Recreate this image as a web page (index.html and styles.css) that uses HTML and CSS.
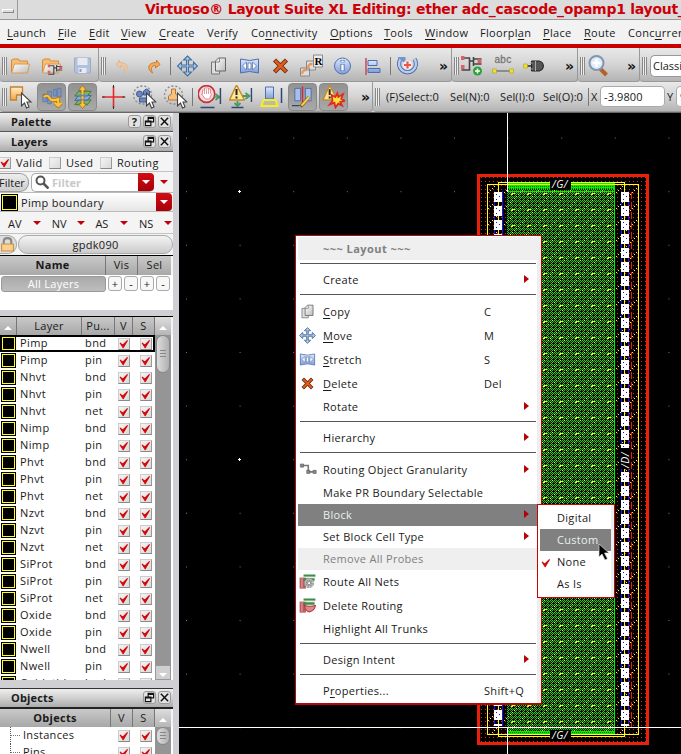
FILE: index.html
```html
<!DOCTYPE html>
<html lang="en">
<head>
<meta charset="utf-8">
<title>Virtuoso Layout Suite XL</title>
<link rel="stylesheet" href="styles.css">
</head>
<body>
<svg class="defs" width="0" height="0">
  <defs>
    <linearGradient id="gOr" x1="0" y1="0" x2="0" y2="1"><stop offset="0" stop-color="#fff0cc"/><stop offset="1" stop-color="#f2a645"/></linearGradient>
    <linearGradient id="gBl" x1="0" y1="0" x2="0" y2="1"><stop offset="0" stop-color="#dce8fb"/><stop offset="1" stop-color="#7f9dd8"/></linearGradient>
    <linearGradient id="gGr" x1="0" y1="0" x2="1" y2="1"><stop offset="0" stop-color="#fff"/><stop offset="1" stop-color="#bbb"/></linearGradient>
    <symbol id="folder" viewBox="0 0 24 24"><path d="M3 18V6l2-1h5l1 2h8v4" fill="#f8bd74" stroke="#d58a3a"/><path d="M3 19l3-9h15l-2 9z" fill="url(#gGr)" stroke="#dd9a50"/></symbol>
    <symbol id="net" viewBox="0 0 24 24"><path d="M1 4h8v12H1M9 7h4M13 3v9M13 5h8M13 10h8" fill="none" stroke="#444" stroke-width="1.600"/><path d="M0 2h4v4H0zM0 11h4v4H0zM17 5h4v4h-4z" fill="#d9626a"/></symbol>
    <symbol id="save" viewBox="0 0 24 24"><path d="M4 4h16v15H5l-1-1z" fill="#b4c1da" stroke="#9aabca"/><path d="M7 4h10v7H7zM8 14h8v5H8z" fill="#e6eaf2"/><path d="M10 15v3" stroke="#8b9fc4" stroke-width="2"/></symbol>
    <symbol id="undo" viewBox="0 0 24 24"><path d="M9 6L5.500 10.500 10 14v-2.500c4 0 5 3 3 7.500 6-4 5-10.500-4-10.500z" fill="#efc7a0" stroke="#dcb48c" stroke-width=".8"/></symbol>
    <symbol id="redo" viewBox="0 0 24 24"><path d="M15 6l3.500 4.500L14 14v-2.500c-4 0-5 3-3 7.500-6-4-5-10.500 4-10.500z" fill="#f5a95a" stroke="#c97722" stroke-width=".9"/></symbol>
    <symbol id="move" viewBox="0 0 24 24"><path d="M12 2l4 4h-3v5h5V8l4 4-4 4v-3h-5v5h3l-4 4-4-4h3v-5H6v3l-4-4 4-4v3h5V6H8z" fill="#a9c6e8" stroke="#476f9c" stroke-width="1.100"/></symbol>
    <symbol id="copy" viewBox="0 0 24 24"><path d="M5 8h8v12H5z" fill="#ddd" stroke="#777"/><path d="M9 7l3-3h7v13H9z" fill="url(#gGr)" stroke="#666"/><path d="M9 8h4V4" fill="none" stroke="#888"/></symbol>
    <symbol id="stretch" viewBox="0 0 24 24"><path d="M3 5q9 3 18 0v14q-9-3-18 0z" fill="url(#gBl)" stroke="#4d6eaf"/><path d="M9 8l-4 4 4 4zM15 8l4 4-4 4zM10.500 9h3v6h-3z" fill="#fff" stroke="#5a76b0" stroke-width=".8"/></symbol>
    <symbol id="del" viewBox="0 0 24 24"><path d="M6 6l12 12M18 6L6 18" stroke="#6a2a0c" stroke-width="4.400"/><path d="M6.500 6.500l11 11M17.500 6.500l-11 11" stroke="#dd5b1d" stroke-width="2.600"/></symbol>
    <symbol id="rot" viewBox="0 0 24 24"><path d="M1 14h9v8H1zM7 7h9v9H7z" fill="#dedede" stroke="#888"/><path d="M14 1h9v12h-9z" fill="#eee" stroke="#888"/><path d="M3 20q-1-4 4-4M9 14q-1-4 4-4" fill="none" stroke="#e8995a" stroke-width="2.400"/><text x="15" y="11" font-size="11" font-family="Liberation Serif" font-weight="bold">R</text></symbol>
    <symbol id="info" viewBox="0 0 24 24"><circle cx="12" cy="12" r="8" fill="url(#gBl)" stroke="#5270ae"/><path d="M12 10v7M12 6v2.300" stroke="#4a67a8" stroke-width="4"/><path d="M12 10.500v6M12 6.500v1.500" stroke="#fff" stroke-width="2.400"/></symbol>
    <symbol id="align" viewBox="0 0 24 24"><path d="M4.500 4v17" stroke="#c9525a" stroke-width="1.600"/><path d="M6.500 6.500h9v5h-9zM6.500 14.500h12v4h-12z" fill="url(#gBl)" stroke="#4d6eaf"/></symbol>
    <symbol id="spin" viewBox="0 0 24 24"><path d="M5 5a8.500 8.500 0 1 0 14 0" fill="none" stroke="#4e6da9" stroke-width="4.200"/><path d="M5 5a8.500 8.500 0 1 0 14 0" fill="none" stroke="#b9cdf2" stroke-width="2.400"/><path d="M2 3h8v7z" fill="#7595cf"/><circle cx="12" cy="11" r="4.500" fill="#eef"/><path d="M12 7.500v7M8.500 11h7" stroke="#f0553a" stroke-width="2.200"/></symbol>
    <symbol id="abc" viewBox="0 0 24 24"><text x="3" y="9" font-size="10" font-family="Liberation Sans" fill="#777" stroke="#777" stroke-width=".3">abc</text><path d="M4 17h17" stroke="#777" stroke-width="1.500"/><path d="M1 15h4v4H1zM18 15h4v4h-4z" fill="#f2e12b" stroke="#aaa12a" stroke-width=".6"/></symbol>
    <symbol id="plug" viewBox="0 0 24 24"><path d="M4 12h6" stroke="#555" stroke-width="2"/><path d="M1 10h4v4H1z" fill="#f2e12b" stroke="#aaa12a" stroke-width=".6"/><path d="M9 7h8q4 1 4 5t-4 5H9z" fill="#555" stroke="#222"/><path d="M13 7v10M10 9h-3M10 15H7" stroke="#aaa"/></symbol>
    <symbol id="mag" viewBox="0 0 24 24"><path d="M13 14l7 7" stroke="#b5622a" stroke-width="4"/><circle cx="10" cy="9" r="7" fill="#dcebfa" stroke="#8396ae" stroke-width="2"/><path d="M10 5v8M6 9h8" stroke="#fff" stroke-width="2.400"/></symbol>
    <symbol id="ptr" viewBox="0 0 24 24"><path d="M11 8v13l3-3 2 5 2.500-1-2-5h4z" fill="#fff" stroke="#444" stroke-width="1.100"/></symbol>
    <symbol id="sel" viewBox="0 0 24 24"><path d="M2 2h12v8H8v5H2z" fill="url(#gOr)" stroke="#c9802e" stroke-width="1.300"/><use href="#ptr" x="2"/></symbol>
    <symbol id="wire" viewBox="0 0 24 24"><path d="M3 9h4v8H3zM8 6h4v13H8zM14 4h3v7h-3zM18 3h4v9h-4z" fill="#7893c8" stroke="#526ca5" stroke-width=".6"/><path d="M4 12q4-3 6 1t9 1v6M15.500 18l3.500 3.500 3.500-3.500" fill="none" stroke="#a87414" stroke-width="3.600"/><path d="M4 12q4-3 6 1t9 1v6M15.500 18l3.500 3.500 3.500-3.500" fill="none" stroke="#ffc43d" stroke-width="2.200"/></symbol>
    <symbol id="stack" viewBox="0 0 24 24"><path d="M4 20l4-5h13l-4 5z" fill="#7bb661" stroke="#3e7a34"/><path d="M4 15.500l4-5h13l-4 5z" fill="#8baade" stroke="#3e5f9e"/><path d="M4 11l4-5h13l-4 5z" fill="#7bb661" stroke="#3e7a34"/><path d="M12 0l4 5h-2.500v14H16l-4 5-4-5h2.500V5H8z" fill="#ffc43d" stroke="#8e6415" stroke-width=".7"/><path d="M7 15h10M7 10.500h10" stroke="#5f82c0" stroke-width="1.500"/></symbol>
    <symbol id="cross" viewBox="0 0 24 24"><path d="M12 1v22M1 12h22" stroke="#e8282c" stroke-width="1.600"/><path d="M12 0v3M12 21v3M0 12h3M21 12h3" stroke="#333"/></symbol>
    <symbol id="shapes" viewBox="0 0 24 24"><circle cx="10" cy="10" r="9" fill="none" stroke="#888" stroke-dasharray="2 2" stroke-width="1.300"/><circle cx="7" cy="9" r="3" fill="#6d88c0" stroke="#3f5a92"/><path d="M11 6l3-2 3 2v4h-6zM7 13h7v4H7z" fill="#6d88c0" stroke="#3f5a92"/><use href="#ptr" x="3"/></symbol>
    <symbol id="stamp" viewBox="0 0 24 24"><circle cx="10" cy="10" r="9" fill="none" stroke="#888" stroke-dasharray="2 2" stroke-width="1.300"/><path d="M8 4h4v5l3 2v4H5v-4l3-2z" fill="#f7c27f" stroke="#bd762c"/><use href="#ptr" x="3"/></symbol>
    <symbol id="hand" viewBox="0 0 24 24"><circle cx="9" cy="9" r="8.300" fill="#f8dcdc" stroke="#c9303b" stroke-width="1.700"/><path d="M5 9V5h2V3h4v1h2v4l1 1-2 5H8L4 9z" fill="#fff" stroke="#d17b80" stroke-width=".8"/><path d="M7 5v4M9 4v5M11 4v5" stroke="#d17b80" stroke-width=".7"/><path d="M16 12h5M18 9l4 3-4 3" stroke="#4c9a61" fill="none" stroke-width="1.600"/><path d="M23 3v16M3 22.500h14" stroke="#2e4777" stroke-width="1.600"/></symbol>
    <symbol id="warn" viewBox="0 0 24 24"><path d="M8 0L1 15h15z" fill="#ffe793" stroke="#c58a25" stroke-linejoin="round" stroke-width="1.400"/><path d="M8 4v6M8 11.500v2" stroke="#222" stroke-width="2"/></symbol>
    <symbol id="arr" viewBox="0 0 24 24"><path d="M14 11h6M17 8l4 3-4 3M9 16v4M6 18l3 3 3-3" stroke="#4c9a61" fill="none" stroke-width="1.800"/><path d="M23 3v14M3 22.500h12" stroke="#2e4777" stroke-width="1.500"/></symbol>
    <symbol id="hilite" viewBox="0 0 24 24"><path d="M6 2h8v12H6z" fill="url(#gBl)" stroke="#4d6eaf"/><path d="M4 15h12l2 6H2z" fill="#bba" stroke="#f6ee22" stroke-width="2"/><path d="M22 3v15" stroke="#2e4777" stroke-width="1.500"/></symbol>
    <symbol id="edit" viewBox="0 0 24 24"><path d="M4 3h6v13H4zM15 3h6v13h-6z" fill="#a9bfe8" stroke="#4d6eaf"/><path d="M12 1v19" stroke="#d82834" stroke-width="1.500"/><path d="M1 21h8" stroke="#2e4777" stroke-width="1.500"/><path d="M10 22l9-10" stroke="#7d5a18" stroke-width="3.400"/><path d="M11 21l8-9" stroke="#ffd54f" stroke-width="2"/></symbol>
    <symbol id="boom" viewBox="0 0 24 24"><path d="M10 10l4 2 2-4 1 4 5-3-2 5 4 2-5 1 2 4-4-2-3 4-1-5-5 2 3-4z" fill="#f6e53a" stroke="#e5281c" stroke-width="1.800"/></symbol>
    <symbol id="route" viewBox="0 0 24 24"><path d="M2 7h8v14H2z" fill="#bf5b62"/><path d="M7 3h15v3H7zM7 8h14v3H7z" fill="#3e8b4a"/><path d="M7 6.500h14" stroke="#cfe5cf"/><path d="M5 7v13" stroke="#e8b6b8"/></symbol>
    <symbol id="gear" viewBox="0 0 24 24"><circle cx="14" cy="14" r="4.600" fill="#ccc" stroke="#888" stroke-width="3.500" stroke-dasharray="2.500 1"/><circle cx="14" cy="14" r="5" fill="none" stroke="#bbb" stroke-width="1.500"/><circle cx="14" cy="14" r="2" fill="#fff" stroke="#777"/></symbol>
    <symbol id="gran" viewBox="0 0 24 24"><path d="M6 7h7v8h7" fill="none" stroke="#777" stroke-width="2"/><path d="M3 5h4v4H3zM11 13h4v4h-4zM19 13h4v4h-4z" fill="#888" stroke="#555" stroke-width=".7"/></symbol>
    <symbol id="tick" viewBox="0 0 12 12"><path d="M1.500 5l3 2.500L10 2 5 10.500z" fill="#d40a0a" stroke="#d40a0a" stroke-width="1.300" stroke-linejoin="round"/></symbol>
    <symbol id="wins" viewBox="0 0 12 12"><path d="M4.500 1.500h6v5h-6zM4 2.500h7M1.500 5.500h6v5h-6zM1 6.500h7" fill="none" stroke="#111" stroke-width="1.300"/></symbol>
    <symbol id="ex" viewBox="0 0 12 12"><path d="M2 2l8 8M10 2l-8 8" stroke="#111" stroke-width="1.600"/></symbol>
  </defs>
</svg>
<div class="window">
  <header class="titlebar"><span class="sysbtn"><i></i></span><span class="title">Virtuoso® Layout Suite XL Editing: ether adc_cascode_opamp1 layout_</span></header>
  <nav class="menubar">
    <span><u>L</u>aunch</span><span><u>F</u>ile</span><span><u>E</u>dit</span><span><u>V</u>iew</span><span><u>C</u>reate</span><span>Ver<u>i</u>fy</span><span>Co<u>n</u>nectivity</span><span><u>O</u>ptions</span><span><u>T</u>ools</span><span><u>W</u>indow</span><span>Floorpl<u>a</u>n</span><span><u>P</u>lace</span><span><u>R</u>oute</span><span>Conc<u>u</u>rrent</span>
  </nav>
  <div class="toolbar one">
    <div class="group g1"><i class="grip"></i><svg><use href="#folder"/></svg><svg viewBox="0 0 24 24"><use href="#folder" width="24" height="24"/><g transform="translate(8 9) scale(.7)"><use href="#net" width="24" height="24"/></g></svg><svg><use href="#save"/></svg></div>
    <div class="group g2"><i class="grip"></i><svg class="first"><use href="#undo"/></svg><svg><use href="#redo"/></svg><i class="sep"></i><svg><use href="#move"/></svg><svg><use href="#copy"/></svg><svg><use href="#stretch"/></svg><svg><use href="#del"/></svg><svg><use href="#rot"/></svg><svg><use href="#info"/></svg><svg><use href="#align"/></svg><i class="sep"></i><svg><use href="#spin"/></svg><b class="more">»</b></div>
    <div class="group g3"><i class="grip"></i><svg viewBox="0 0 24 24"><use href="#net" width="24" height="24"/><circle cx="17" cy="17" r="4.500" fill="#2aa336"/><path d="M17 14.500v5M14.500 17h5" stroke="#fff" stroke-width="1.500"/></svg><svg><use href="#abc"/></svg><svg><use href="#plug"/></svg><b class="more">»</b></div>
    <div class="group g4"><i class="grip"></i><svg><use href="#mag"/></svg><b class="more">»</b></div>
    <div class="group g5"><i class="grip"></i><span class="combo">Classi</span></div>
  </div>
  <div class="toolbar two">
    <div class="group h1"><i class="grip"></i><svg><use href="#sel"/></svg><svg class="on"><use href="#wire"/></svg><svg class="on"><use href="#stack"/></svg><svg><use href="#cross"/></svg><svg><use href="#shapes"/></svg><svg><use href="#stamp"/></svg><i class="sep"></i><svg><use href="#hand"/></svg><svg><use href="#warn"/><use href="#arr"/></svg><svg><use href="#hilite"/></svg><svg class="on"><use href="#edit"/></svg><svg class="on"><use href="#warn"/><use href="#boom"/></svg><b class="more">»</b></div>
    <div class="group h2"><i class="grip"></i><span class="s1">(F)Select:0</span><span class="s2">Sel(N):0</span><span class="s3">Sel(I):0</span><span class="s4">Sel(O):0</span><i class="sep"></i><span class="lab">X</span><span class="num">-3.9800</span><span class="lab">Y</span><span class="num">9</span></div>
  </div>
  <main class="body">
    <aside class="side">
      <div class="dock">Palette<span class="dbtn">?</span><svg class="dbtn"><use href="#wins"/></svg><svg class="dbtn"><use href="#ex"/></svg></div>
      <div class="dock second">Layers<svg class="dbtn"><use href="#wins"/></svg><svg class="dbtn"><use href="#ex"/></svg></div>
      <div class="opts"><svg class="ck"><use href="#tick"/></svg><span class="o1">Valid</span><i class="ck"></i><span class="o2">Used</span><i class="ck"></i><span>Routing</span></div>
      <div class="filter"><span class="fbtn">Filter</span><span class="search"><svg viewBox="0 0 14 14"><circle cx="5.500" cy="5.500" r="4" fill="none" stroke="#555" stroke-width="2"/><path d="M8.500 8.500l5 5" stroke="#555" stroke-width="2.600"/></svg><em>Filter</em><b class="drop"></b></span><i class="tri"></i></div>
      <div class="pick"><i class="sw"></i><span>Pimp boundary</span><b class="drop"></b></div>
      <div class="avs"><span>AV</span><i class="tri"></i><span>NV</span><i class="tri"></i><span>AS</span><i class="tri"></i><span>NS</span><i class="tri"></i></div>
      <div class="lib"><span class="lock"><svg viewBox="0 0 14 14"><path d="M3.500 7V4q0-3 3.500-3t3.500 3v3" fill="none" stroke="#888" stroke-width="2"/><path d="M1.500 6.500h11v6.500h-11z" fill="#fbcf8d" stroke="#c9913f"/></svg></span><span class="libname">gpdk090</span></div>
      <div class="head names"><b>Name</b><span>Vis</span><span>Sel</span></div>
      <div class="all"><span class="allbtn">All Layers</span><i>+</i><i>-</i><i>+</i><i>-</i></div>
      <div class="gap"></div>
      <div class="head cols"><span><i class="up"></i></span><span>Layer</span><span>Pu...</span><span>V</span><span>S</span><span class="sb-up"><i class="up"></i></span></div>
      <div class="list">
        <div class="rows">
          <div class="row cur"><i class="sw"></i><span>Pimp</span><span>bnd</span><svg class="ck"><use href="#tick"/></svg><svg class="ck"><use href="#tick"/></svg></div>
          <div class="row"><i class="sw"></i><span>Pimp</span><span>pin</span><svg class="ck"><use href="#tick"/></svg><svg class="ck"><use href="#tick"/></svg></div>
          <div class="row"><i class="sw"></i><span>Nhvt</span><span>bnd</span><svg class="ck"><use href="#tick"/></svg><svg class="ck"><use href="#tick"/></svg></div>
          <div class="row"><i class="sw"></i><span>Nhvt</span><span>pin</span><svg class="ck"><use href="#tick"/></svg><svg class="ck"><use href="#tick"/></svg></div>
          <div class="row"><i class="sw"></i><span>Nhvt</span><span>net</span><svg class="ck"><use href="#tick"/></svg><svg class="ck"><use href="#tick"/></svg></div>
          <div class="row"><i class="sw"></i><span>Nimp</span><span>bnd</span><svg class="ck"><use href="#tick"/></svg><svg class="ck"><use href="#tick"/></svg></div>
          <div class="row"><i class="sw"></i><span>Nimp</span><span>pin</span><svg class="ck"><use href="#tick"/></svg><svg class="ck"><use href="#tick"/></svg></div>
          <div class="row"><i class="sw"></i><span>Phvt</span><span>bnd</span><svg class="ck"><use href="#tick"/></svg><svg class="ck"><use href="#tick"/></svg></div>
          <div class="row"><i class="sw"></i><span>Phvt</span><span>pin</span><svg class="ck"><use href="#tick"/></svg><svg class="ck"><use href="#tick"/></svg></div>
          <div class="row"><i class="sw"></i><span>Phvt</span><span>net</span><svg class="ck"><use href="#tick"/></svg><svg class="ck"><use href="#tick"/></svg></div>
          <div class="row"><i class="sw"></i><span>Nzvt</span><span>bnd</span><svg class="ck"><use href="#tick"/></svg><svg class="ck"><use href="#tick"/></svg></div>
          <div class="row"><i class="sw"></i><span>Nzvt</span><span>pin</span><svg class="ck"><use href="#tick"/></svg><svg class="ck"><use href="#tick"/></svg></div>
          <div class="row"><i class="sw"></i><span>Nzvt</span><span>net</span><svg class="ck"><use href="#tick"/></svg><svg class="ck"><use href="#tick"/></svg></div>
          <div class="row"><i class="sw"></i><span>SiProt</span><span>bnd</span><svg class="ck"><use href="#tick"/></svg><svg class="ck"><use href="#tick"/></svg></div>
          <div class="row"><i class="sw"></i><span>SiProt</span><span>pin</span><svg class="ck"><use href="#tick"/></svg><svg class="ck"><use href="#tick"/></svg></div>
          <div class="row"><i class="sw"></i><span>SiProt</span><span>net</span><svg class="ck"><use href="#tick"/></svg><svg class="ck"><use href="#tick"/></svg></div>
          <div class="row"><i class="sw"></i><span>Oxide</span><span>bnd</span><svg class="ck"><use href="#tick"/></svg><svg class="ck"><use href="#tick"/></svg></div>
          <div class="row"><i class="sw"></i><span>Oxide</span><span>pin</span><svg class="ck"><use href="#tick"/></svg><svg class="ck"><use href="#tick"/></svg></div>
          <div class="row"><i class="sw"></i><span>Nwell</span><span>bnd</span><svg class="ck"><use href="#tick"/></svg><svg class="ck"><use href="#tick"/></svg></div>
          <div class="row"><i class="sw"></i><span>Nwell</span><span>pin</span><svg class="ck"><use href="#tick"/></svg><svg class="ck"><use href="#tick"/></svg></div>
          <div class="row"><i class="sw"></i><span>Oxidethk</span><span>bnd</span><svg class="ck"><use href="#tick"/></svg><svg class="ck"><use href="#tick"/></svg></div>
        </div>
        <div class="sbar"><i class="thumb"></i><span class="sb-dn"><i class="dn"></i></span></div>
      </div>
      <div class="gap2"></div>
      <div class="dock obj">Objects<svg class="dbtn"><use href="#wins"/></svg><svg class="dbtn"><use href="#ex"/></svg></div>
      <div class="head objs"><b>Objects</b><span>V</span><span>S</span><span class="sb-up"><i class="up"></i></span></div>
      <div class="list olist">
        <div class="rows">
          <div class="orow"><i class="branch"></i><span>Instances</span><svg class="ck"><use href="#tick"/></svg><svg class="ck"><use href="#tick"/></svg></div>
          <div class="orow"><i class="branch"></i><span>Pins</span><svg class="ck"><use href="#tick"/></svg><svg class="ck"><use href="#tick"/></svg></div>
        </div>
        <div class="sbar"><i class="thumb small"></i></div>
      </div>
    </aside>
    <div class="split"></div>
    <svg class="canvas" viewBox="179 113 502 641" shape-rendering="crispEdges">
      <defs>
        <pattern id="pGreen" width="4" height="4" patternUnits="userSpaceOnUse"><rect width="4" height="4" fill="#000"/><path d="M0 0h1v1H0zM2 0h1v1H2zM1 1h1v1H1zM3 1h1v1H3zM0 2h1v1H0zM3 3h1v1H3z" fill="#00e800"/></pattern>
        <pattern id="pRed" width="4" height="4" patternUnits="userSpaceOnUse"><rect x="1" y="1" width="1" height="1" fill="#e8200c"/></pattern>
        <pattern id="pRed2" width="4" height="4" patternUnits="userSpaceOnUse"><rect x="2" y="2" width="1" height="1" fill="#e8200c"/></pattern>
        <pattern id="pDiag" width="16" height="16" patternUnits="userSpaceOnUse" x="507" y="190"><path d="M1 14h1v1H1zM3 12h1v1H3zM5 10h1v1H5zM7 8h1v1H7zM9 6h1v1H9zM11 4h1v1h-1zM13 2h1v1h-1zM15 0h1v1h-1z" fill="#f4f420"/></pattern>
        <pattern id="pKnot" width="16" height="16" patternUnits="userSpaceOnUse" x="507" y="190"><path d="M5 3h3v1H5zM4 4h2v1H4z" fill="#f4f420"/></pattern>
        <pattern id="pDense" width="2" height="2" patternUnits="userSpaceOnUse"><rect width="2" height="2" fill="#00f000"/><rect width="1" height="1" fill="#006a00"/></pattern>
        <pattern id="pVia" width="8" height="14" patternUnits="userSpaceOnUse" x="494" y="192"><rect width="8" height="10" fill="#fff"/><path d="M2 2h1v1H2zM5 4h1v1H5zM2 7h1v1H2z" fill="#1010ff"/></pattern>
        <pattern id="pGrid" width="53.600" height="53.600" patternUnits="userSpaceOnUse" x="186" y="137.600"><rect width="1" height="1" fill="#777"/></pattern>
      </defs>
      <rect x="179" y="113" width="502" height="641" fill="#000"/>
      <rect x="179" y="113" width="502" height="641" fill="url(#pGrid)"/>
      <path d="M238 191h3M239.500 190v3M238 459h3M239.500 458v3M238 727h3" stroke="#fff"/>
      <rect x="478.500" y="175.500" width="169" height="568" fill="#000"/>
      <rect x="478.500" y="175.500" width="169" height="568" fill="url(#pRed)" stroke="#e8200c" stroke-width="3"/>
      <rect x="488" y="185" width="150" height="549" fill="url(#pDiag)"/>
      <rect x="507" y="184" width="108" height="550" fill="url(#pGreen)"/>
      <rect x="507" y="184" width="108" height="550" fill="url(#pRed2)"/>
      <rect x="507" y="184" width="108" height="550" fill="url(#pDiag)"/>
      <rect x="507" y="184" width="108" height="550" fill="url(#pKnot)"/>
      <path d="M507 183h108v6H507zM507 731h108v3H507z" fill="url(#pDense)"/>
      <path d="M507 191.500h108M614.500 184v550" stroke="#00f000"/>
      <path d="M631.500 192v535" stroke="#e8200c" stroke-dasharray="7 3"/>
      <path d="M494.500 191v535M502.500 191v535M621.500 191v535M628.500 191v535" stroke="#1414ff"/>
      <rect x="494" y="192" width="8" height="534" fill="url(#pVia)"/>
      <g transform="translate(127 0)"><rect x="494" y="192" width="8" height="534" fill="url(#pVia)"/></g>
      <path d="M498.500 202v524M624.500 202v524" stroke="#f4f420" stroke-dasharray="4 10"/>
      <path d="M487.500 184.500h151v550h-151zM498.500 192v-9.500h126v9.500M498.500 726v10.500h126V726" fill="none" stroke="#ffff18"/>
      <path d="M507.500 113v79M507.500 727v27M179 727.500h502" stroke="#fff"/>
      <path d="M550 179h21v11h-21zM550 730h21v10h-21zM619 448h12v21h-12z" fill="#000"/>
      <g class="pins"><text x="552" y="188">/G/</text><text x="552" y="739">/G/</text><text transform="translate(629 468) rotate(-90)">/D/</text></g>
    </svg>
  </main>
  <div class="menu">
    <div class="item cap"><span>~~~ Layout ~~~</span></div>
    <hr>
    <div class="item"><span>Create</span><i class="arrow"></i></div>
    <hr>
    <div class="item tall"><svg><use href="#copy"/></svg><span><u>C</u>opy</span><kbd>C</kbd></div>
    <div class="item tall"><svg><use href="#move"/></svg><span><u>M</u>ove</span><kbd>M</kbd></div>
    <div class="item tall"><svg><use href="#stretch"/></svg><span><u>S</u>tretch</span><kbd>S</kbd></div>
    <div class="item tall"><svg><use href="#del"/></svg><span><u>D</u>elete</span><kbd>Del</kbd></div>
    <div class="item"><span>Rotate</span><i class="arrow"></i></div>
    <hr>
    <div class="item"><span>Hierarchy</span><i class="arrow"></i></div>
    <hr>
    <div class="item tall"><svg><use href="#gran"/></svg><span>Routing Object Granularity</span><i class="arrow"></i></div>
    <div class="item"><span>Make PR Boundary Selectable</span></div>
    <div class="item hot"><span>Block</span><i class="arrow"></i></div>
    <div class="item"><span>Set Block Cell Type</span><i class="arrow"></i></div>
    <div class="item off"><span>Remove All Probes</span></div>
    <div class="item tall"><svg><use href="#route"/><use href="#gear"/></svg><span>Route All Nets</span></div>
    <div class="item tall"><svg viewBox="0 0 24 24"><use href="#route" width="24" height="24"/><path d="M8 12q7 2 14 0-1 7-8 8-5-1-6-8z" fill="#d88a8a" stroke="#b5363d" stroke-width="1.400"/></svg><span>Delete Routing</span></div>
    <div class="item"><span>Highlight All Trunks</span></div>
    <hr>
    <div class="item"><span>Design Intent</span><i class="arrow"></i></div>
    <hr>
    <div class="item"><span>P<u>r</u>operties...</span><kbd>Shift+Q</kbd></div>
  </div>
  <div class="submenu">
    <div class="sub">Digital</div>
    <div class="sub hot">Custom</div>
    <div class="sub"><svg><use href="#tick"/></svg>None</div>
    <div class="sub">As Is</div>
  </div>
  <svg class="cursor" viewBox="0 0 12 18"><path d="M1 1v13l3-3 3 6 2.500-1.300-3-5.700h4.500z" fill="#000" stroke="#ddd" stroke-width=".7"/></svg>
</div>
</body>
</html>
```
FILE: styles.css
```css
* { box-sizing: border-box; }
body { margin: 0; background: #000; font: 11px "Open Sans", "Noto Sans", sans-serif; letter-spacing: .3px; color: #1a1a1a; }
i, em { font-style: normal; }
u { text-decoration: underline; text-underline-offset: 2px; text-decoration-thickness: 1px; text-decoration-skip-ink: none; }
.defs { position: absolute; }
.window { position: relative; width: 681px; height: 754px; overflow: hidden; display: flex; flex-direction: column; }

.titlebar { display: flex; height: 20px; background: #dcdcdc; border-bottom: 1px solid #999; white-space: nowrap; overflow: hidden; }
.sysbtn { flex: none; width: 18px; border-right: 1px solid #999; display: flex; align-items: center; justify-content: center; }
.sysbtn i { width: 12px; height: 4px; border: 1px solid #fff; border-right-color: #888; border-bottom-color: #888; margin-left: -2px; margin-top: 3px; }
.title { margin-left: 127px; font: bold 14px/18px "DejaVu Sans", sans-serif; letter-spacing: -.27px; color: #cc0008; }

.menubar { display: grid; grid-template-columns: 51px 31px 32px 38px 48px 44px 79px 54px 41px 55px 63px 41px 44px 70px; height: 28px; padding-left: 7px; line-height: 26px; background: #f2f2f2; border-bottom: 4px solid #c80000; white-space: nowrap; overflow: hidden; }

.toolbar { display: flex; background: #c9c9c9; overflow: hidden; }
.toolbar.one { height: 34px; }
.toolbar.two { height: 31px; border-bottom: 1px solid #666; }
.group { flex: none; display: flex; align-items: center; background: linear-gradient(#e9e9e9, #d4d4d4 50%, #b4b4b4); border-right: 1px solid #999; border-bottom: 1px solid #999; border-radius: 0 0 4px 4px; white-space: nowrap; }
.group > * { flex: none; }
.one .group { padding-top: 2px; }
.g1 { width: 99px; } .g2 { width: 353px; } .g3 { width: 126px; } .g4 { width: 62px; } .g5 { width: 60px; }
.h1 { width: 373px; } .h2 { width: 330px; }
.group svg { width: 31px; height: 28px; padding: 2px 3.500px; }
.group svg.on { background: linear-gradient(#929292, #a9a9a9); border-radius: 4px; border: 1px solid #8a8a8a; width: 29px; margin: 0 1px; padding: 1px 2px; }
.group svg.first { margin-left: 3px; }
.grip { width: 5px; height: 18px; margin: 0 -2px 0 2px; background: repeating-linear-gradient(90deg, #888 0 1px, #eee 1px 2px); }
.sep { width: 1px; height: 18px; margin: 0 1px; background: #777; }
.more { margin-left: auto; padding: 0 3px 0 0; font: bold 14px/20px "DejaVu Sans", sans-serif; letter-spacing: 0; color: #111; }
.h1 .more { padding-right: 2px; }
.combo { width: 60px; height: 22px; margin-left: 5px; padding-left: 2px; line-height: 20px; letter-spacing: 0; background: #fff; border: 1px solid #999; border-right: 0; border-radius: 5px 0 0 5px; }
.h2 span { letter-spacing: .1px; }
.s1 { width: 64px; margin-left: 8px; } .s2 { width: 50px; } .s3 { width: 43px; } .s4 { width: 44px; }
.lab { width: 10px; padding-left: 1px; }
.num { width: 65px; height: 21px; margin-right: 1px; padding-left: 3px; line-height: 19px; background: #fff; border: 1px solid #aaa; border-radius: 4px; }

.body { display: flex; height: 641px; }
.side { width: 173px; height: 641px; background: #f4f4f4; overflow: hidden; display: flex; flex-direction: column; }
.side > * { flex: none; }
.split { width: 6px; background: #cfcfd4; }
.canvas { width: 502px; height: 641px; display: block; }
.pins { font: italic 10.500px "Open Sans", sans-serif; fill: #fff; }
.pins text { letter-spacing: .5px; }

.dock { height: 20px; padding: 0 0 2px 11px; display: flex; align-items: center; font-weight: bold; letter-spacing: .15px; background: linear-gradient(#eee, #d0d0d0 50%, #acacac); border-bottom: 1px solid #555; }
.side > .dock:first-child { height: 19px; }
.dock.second { padding-bottom: 0; }
.dbtn { width: 13px; height: 13px; margin-right: 2px; border: 1px solid #999; border-radius: 3px; background: #e2e2e2; text-align: center; font-size: 11px; line-height: 11px; }
.dbtn:first-of-type { margin-left: auto; }
.dock span.dbtn + .dbtn { margin-left: 0; }
.ck { width: 12px; height: 12px; background: linear-gradient(135deg, #f4f4f4, #d9d9d9); border: 1px solid #ccc; border-right-color: #999; border-bottom-color: #888; }
.opts { display: flex; align-items: center; height: 20px; padding-top: 2px; border-bottom: 1px solid #c4c4c4; }
.opts .ck { margin-left: -1px; margin-right: 5px; }
.opts i.ck { margin: 0 5px 0 0; }
.o1 { width: 33px; } .o2 { width: 34px; }
.filter { display: flex; align-items: center; height: 20px; }
.fbtn { width: 29px; height: 19px; line-height: 17px; text-indent: -1px; letter-spacing: 0; border: 1px solid #999; border-left: 0; border-radius: 0 9px 9px 0; background: linear-gradient(#eee, #ccc); }
.search { display: flex; align-items: center; width: 123px; height: 19px; margin-left: 2px; padding-left: 3px; background: #fff; border: 1px solid #aaa; border-right: 0; border-radius: 5px; }
.search svg { width: 14px; height: 14px; }
.search em { margin-left: 3px; font-weight: bold; letter-spacing: 0; color: #c9c9c9; }
.drop { margin-left: auto; width: 16px; height: 18px; background: linear-gradient(#d30c14, #a80008); border-radius: 0 4px 4px 0; display: flex; align-items: center; justify-content: center; }
.drop::before, .tri { content: ""; border: 4px solid transparent; border-top-color: #fff; border-bottom: 0; }
.tri { border-top-color: #c4000c; }
.filter .tri { margin-left: 6px; }
.sw { width: 15px; height: 15px; background: #000; border: 1px solid #000; box-shadow: inset 0 0 0 1px #ffff18; }
.pick { display: flex; align-items: center; height: 20px; padding: 0 1px; background: linear-gradient(#fff, #e6e6e6); border: 1px solid #bbb; border-width: 1px 0; }
.pick .sw { width: 17px; height: 17px; margin-right: 3px; }
.avs { display: flex; align-items: center; height: 22px; padding: 1px 0 0 8px; border-bottom: 1px solid #c4c4c4; letter-spacing: 0; }
.avs > * { flex: none; }
.avs span { width: 25px; } .avs .tri { margin-right: 10.700px; }
.lib { display: flex; height: 22px; padding-top: 1px; border-bottom: 1px solid #000; }
.lock { width: 17px; height: 19px; border: 1px solid #aaa; border-left: 0; border-radius: 0 9px 9px 0; background: #ddd; display: flex; align-items: center; }
.lock svg { width: 15px; height: 15px; }
.libname { width: 155px; height: 19px; margin-left: 1px; line-height: 17px; text-align: center; border: 1px solid #aaa; border-radius: 9px; background: linear-gradient(#f4f4f4, #cbcbcb); }
.head { display: grid; height: 18px; width: 171px; line-height: 18px; text-align: center; background: linear-gradient(#c9c9c9, #a8a8a8); }
.head > * + * { border-left: 1px solid #777; }
.names { grid-template-columns: 105px 32px 34px; height: 19px; }
.all { display: flex; gap: 2px; height: 35px; padding: 1px 0 0 1px; background: #fff; }
.allbtn { width: 105px; height: 16px; line-height: 14px; text-align: center; color: #fff; background: linear-gradient(#aaa, #bdbdbd); border: 1px solid #999; border-radius: 3px; }
.all i { width: 14px; height: 15px; line-height: 13px; text-align: center; letter-spacing: 0; border: 1px solid #aaa; border-radius: 3px; background: #f7f7f7; }
.gap { height: 7px; background: #cfcfd4; border-bottom: 1px solid #000; }
.cols { grid-template-columns: 16px 65px 33px 18px 22px 17px; height: 18px; }
.up, .dn { display: inline-block; border: 4px solid transparent; border-bottom-color: #fff; border-top: 0; }
.dn { border: 4px solid transparent; border-top-color: #fff; border-bottom: 0; }
.sb-up { background: linear-gradient(#ddd, #b5b5b5); }
.list { display: flex; height: 345px; width: 173px; background: #fff; overflow: hidden; }
.rows { width: 155px; overflow: hidden; }
.row { display: grid; grid-template-columns: 20px 65px 33px 22px 15px; align-items: center; height: 17px; line-height: 15px; letter-spacing: .4px; }
.row span, .orow span { padding-bottom: 2px; }
.row .sw { margin-left: 1px; }
.row.cur { outline: 2px solid #000; outline-offset: -2px; }
.sbar { width: 16px; background: #959595; display: flex; flex-direction: column; justify-content: space-between; }
.thumb { width: 14px; height: 38px; margin: 0 1px; border-radius: 7px; border: 1px solid #888; background: repeating-linear-gradient(#888 0 1px, transparent 1px 3px) 50% 50% / 6px 9px no-repeat, linear-gradient(90deg, #ddd, #b0b0b0); }
.thumb.small { height: 18px; }
.sb-dn { height: 15px; text-align: center; line-height: 13px; background: #cfcfcf; border: 1px solid #999; }
.gap2 { height: 8px; background: #cfcfd4; }
.dock.obj { height: 21px; border-top: 1px solid #333; border-bottom: 2px solid #222; }
.objs { grid-template-columns: 110px 22px 22px 17px; height: 18px; }
.olist { height: 28px; }
.orow { display: grid; grid-template-columns: 23px 95px 22px 15px; align-items: center; height: 17px; line-height: 15px; }
.branch { align-self: stretch; margin-left: 10px; width: 10px; border-left: 1px dotted #555; background: linear-gradient(90deg, #777 50%, transparent 50%) 0 50% / 2px 1px repeat-x; }

.menu { position: absolute; left: 295px; top: 235px; width: 247px; height: 470px; background: #fff; border: 1px solid #b40808; border-bottom-width: 2px; box-shadow: inset -4px 0 #eee; padding: 1px 4px 0 2px; }
.menu hr { height: 1px; margin: 3px 1px 5px 2px; border: 0; background: #555; }
.item { display: grid; grid-template-columns: 25px 161px 1fr; align-items: center; height: 22px; padding-bottom: 2px; }
.item span { grid-column: 2; grid-row: 1; white-space: nowrap; }
.item svg { grid-column: 1; grid-row: 1; width: 19px; height: 19px; }
.item kbd { grid-column: 3; grid-row: 1; font: inherit; }
.item.tall { height: 24px; }
.item.cap { height: 23px; padding-bottom: 0; background: #efefef; color: #808080; font-weight: bold; letter-spacing: .45px; }
.item.hot, .sub.hot { background: #808080; color: #e8f0f0; }
.item.off { background: #efefef; color: #808080; }
.arrow { grid-column: 3; grid-row: 1; justify-self: end; margin-right: 8px; border: 4px solid transparent; border-left: 5px solid #b80008; border-right: 0; }
.submenu { position: absolute; left: 537px; top: 504px; width: 78px; height: 94px; background: #fff; border: 1px solid #c00808; box-shadow: inset -3px 0 #eee; padding: 2px 3px 0 2px; }
.sub { height: 22px; line-height: 22px; padding-left: 17px; position: relative; }
.sub svg { position: absolute; left: 1px; top: 7px; width: 10px; height: 10px; }
.cursor { position: absolute; left: 598px; top: 543px; width: 12px; height: 18px; }
```
